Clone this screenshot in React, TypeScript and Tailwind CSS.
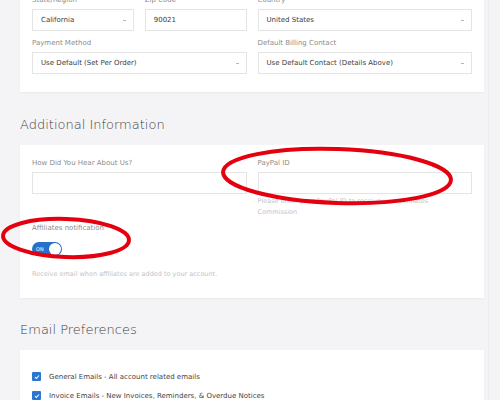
import React from "react";

const font = { fontFamily: '"DejaVu Sans", "Liberation Sans", sans-serif' };

function Label({ children }: { children: React.ReactNode }) {
  return <div className="text-[7px] leading-[9px] text-[#8c8c8c] mb-[4px] whitespace-nowrap">{children}</div>;
}

function Select({ value, className = "" }: { value: string; className?: string }) {
  return (
    <div className={`h-[22px] border border-[#e4e4e4] bg-white flex items-center justify-between pl-[8px] pr-[7px] ${className}`}>
      <span className="text-[7px] text-[#3c3c3c] whitespace-nowrap">{value}</span>
      <span className="w-[3px] h-[1px] bg-[#b5b5b5]" />
    </div>
  );
}

function Input({ value = "" }: { value?: string }) {
  return (
    <div className="h-[22px] border border-[#e4e4e4] bg-white flex items-center pl-[8px]">
      <span className="text-[7px] text-[#3c3c3c]">{value}</span>
    </div>
  );
}

function Check({ label }: { label: string }) {
  return (
    <div className="flex items-center gap-[8px] h-[10px]">
      <div className="w-[9px] h-[9px] bg-[#2b77d0] rounded-[1px] flex items-center justify-center">
        <svg width="6" height="6" viewBox="0 0 6 6">
          <path d="M1 3.2 L2.4 4.5 L5 1.5" stroke="white" strokeWidth="1.1" fill="none" />
        </svg>
      </div>
      <span className="text-[7px] text-[#444] whitespace-nowrap">{label}</span>
    </div>
  );
}

export default function App() {
  return (
    <div className="relative w-[500px] h-[400px] overflow-hidden bg-[#f4f4f6]" style={font}>
      <div className="absolute right-[11px] top-0 bottom-0 w-px bg-[#ececef]" />
      <div className="pl-[20px] w-[484px] flex flex-col">
        {/* top card */}
        <div className="bg-white shadow-[0_1px_2px_rgba(0,0,0,0.05)] px-[12px] pb-[18px] -mt-[4px]">
          <div className="grid grid-cols-2 gap-x-[11px]">
            <div className="grid grid-cols-2 gap-x-[11px]">
              <div>
                <Label>State/Region</Label>
                <Select value="California" />
              </div>
              <div>
                <Label>Zip Code</Label>
                <Input value="90021" />
              </div>
            </div>
            <div>
              <Label>Country</Label>
              <Select value="United States" />
            </div>
            <div className="mt-[8px]">
              <Label>Payment Method</Label>
              <Select value="Use Default (Set Per Order)" />
            </div>
            <div className="mt-[8px]">
              <Label>Default Billing Contact</Label>
              <Select value="Use Default Contact (Details Above)" />
            </div>
          </div>
        </div>

        <div className="h-[53px] flex items-end pb-[14px]">
          <h2 className="text-[13px] font-light text-[#3f3f3f] leading-none">Additional Information</h2>
        </div>

        {/* additional card */}
        <div className="bg-white shadow-[0_1px_2px_rgba(0,0,0,0.05)] px-[12px] pt-[14px] pb-[18px]">
          <div className="grid grid-cols-2 gap-x-[11px]">
            <div>
              <Label>How Did You Hear About Us?</Label>
              <Input />
            </div>
            <div>
              <Label>PayPal ID</Label>
              <Input />
              <div className="text-[6.5px] leading-[11px] text-[#c4c4c4] mt-[2px]">
                Please enter your PayPal ID to receive your Affiliates
                <br />
                Commission
              </div>
            </div>
          </div>
          <div className="mt-[6px]">
            <Label>Affiliates notification</Label>
            <div className="mt-[9px] w-[30px] h-[14px] rounded-full bg-[#2770c9] flex items-center justify-between pl-[4px] pr-[1px]">
              <span className="text-[5px] text-white leading-none">ON</span>
              <span className="w-[12px] h-[12px] rounded-full bg-white" />
            </div>
            <div className="text-[6.5px] text-[#c4c4c4] mt-[14px] whitespace-nowrap">
              Receive email when affiliates are added to your account.
            </div>
          </div>
        </div>

        <div className="h-[52px] flex items-end pb-[14px]">
          <h2 className="text-[13px] font-light text-[#3f3f3f] leading-none">Email Preferences</h2>
        </div>

        <div className="bg-white shadow-[0_1px_2px_rgba(0,0,0,0.05)] px-[12px] pt-[22px] pb-[20px] flex flex-col gap-[9px]">
          <Check label="General Emails - All account related emails" />
          <Check label="Invoice Emails - New Invoices, Reminders, & Overdue Notices" />
        </div>
      </div>

      {/* red annotation ellipses */}
      <svg className="absolute left-0 top-0 pointer-events-none" width="500" height="400">
        <ellipse cx="337" cy="176" rx="114" ry="27" fill="none" stroke="#e4000f" strokeWidth="4" transform="rotate(2 337 176)" />
        <ellipse cx="66" cy="238" rx="63" ry="19" fill="none" stroke="#e4000f" strokeWidth="4" transform="rotate(2 66 238)" />
      </svg>
    </div>
  );
}
